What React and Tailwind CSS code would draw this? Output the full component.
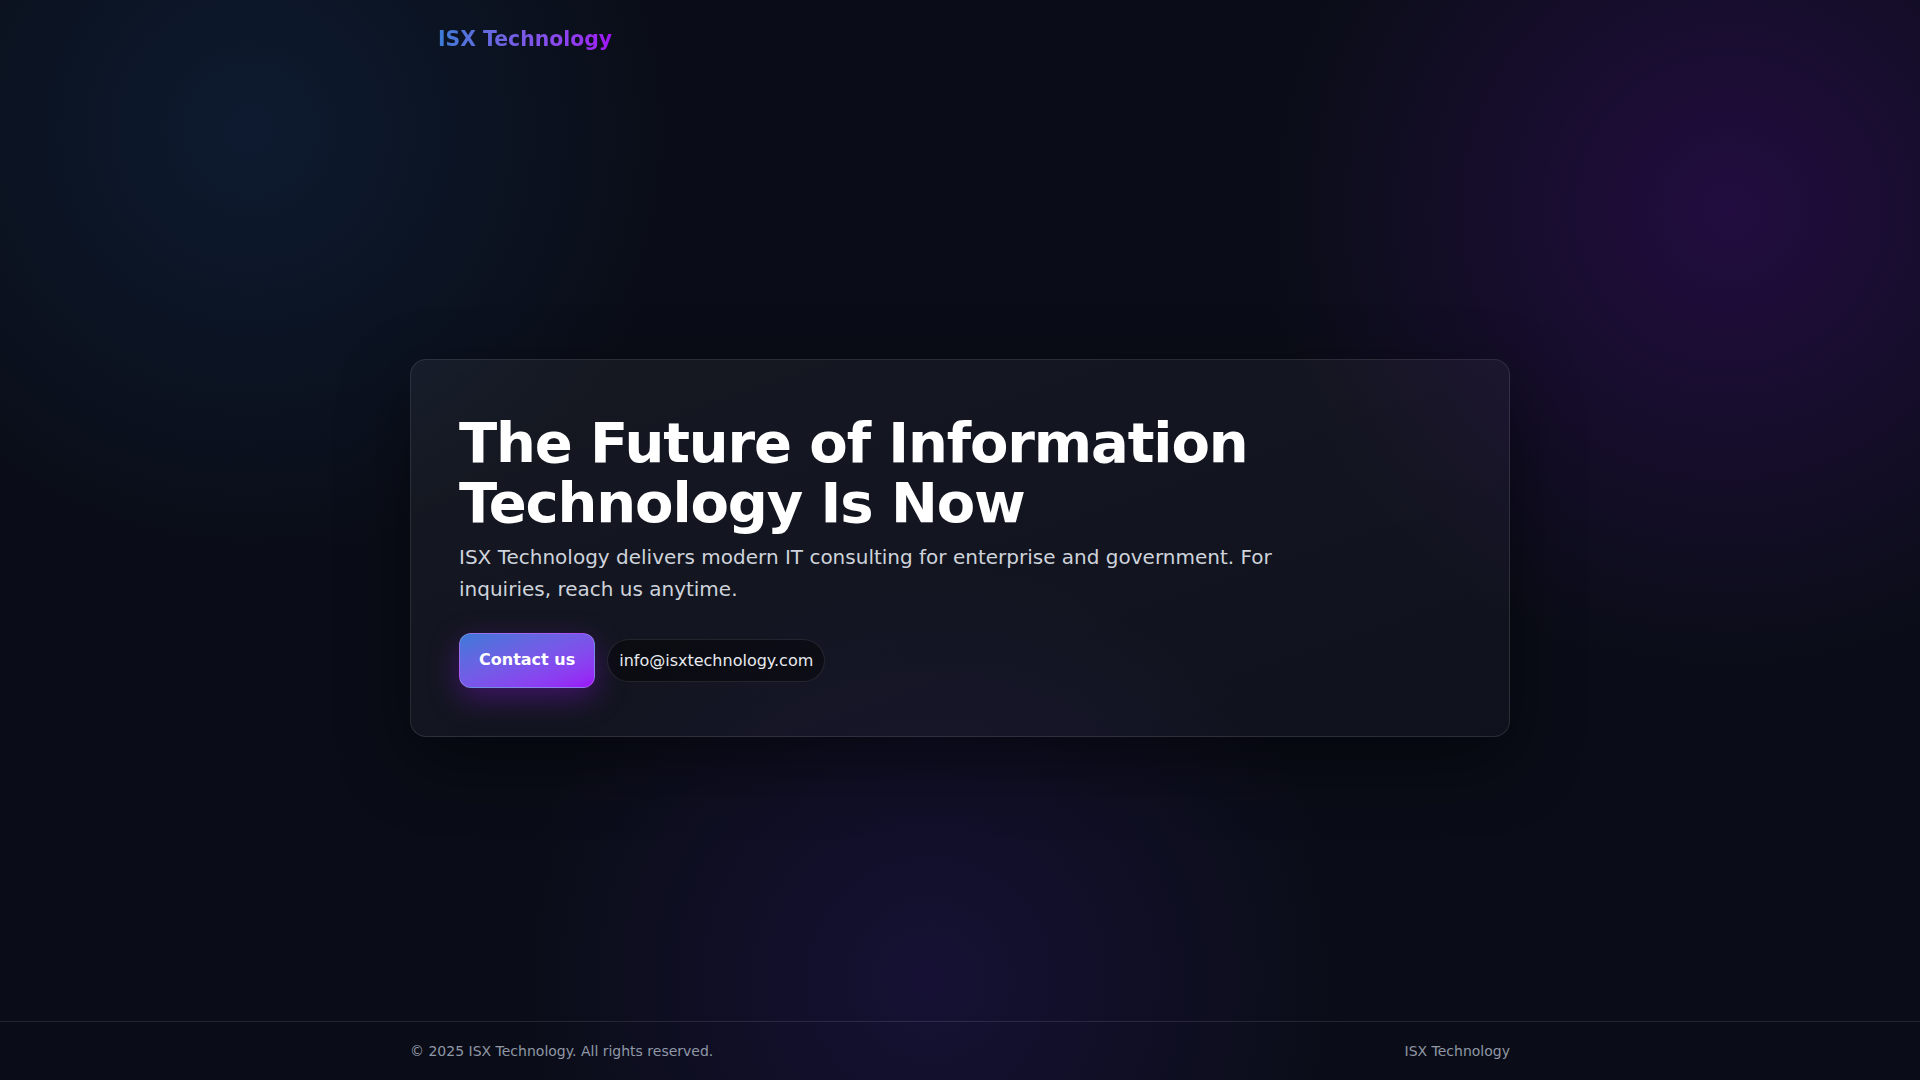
import React from "react";

export default function App() {
  return (
    <div className="min-h-screen flex flex-col bg-[#0a0d17] bg-[radial-gradient(600px_circle_at_250px_130px,rgba(16,40,72,0.5),transparent_72%),radial-gradient(620px_circle_at_1730px_210px,rgba(58,12,104,0.5),transparent_75%),radial-gradient(560px_circle_at_930px_980px,rgba(38,22,92,0.42),transparent_75%)] font-['DejaVu_Sans',sans-serif] text-white">
      <header className="w-full max-w-[1100px] mx-auto px-7 pt-[25px] pb-[19px]">
        <span className="text-[20.4px] font-bold leading-7 bg-gradient-to-r from-[#3a7bd5] to-[#a00cf7] bg-clip-text text-transparent">
          ISX Technology
        </span>
      </header>

      <main className="flex-1 flex items-center pt-[2px]">
        <section className="w-full max-w-[1100px] mx-auto rounded-2xl border border-white/10 bg-gradient-to-br from-white/[0.05] to-white/[0.025] shadow-[0_24px_70px_rgba(0,0,0,0.45)] p-12">
          <h1 className="mt-[5px] text-[56px] leading-[60px] font-bold tracking-[-0.02em] text-white">
            The Future of Information
            <br />
            Technology Is Now
          </h1>
          <p className="mt-2 max-w-[840px] text-[20px] leading-8 text-[#cfd3dc]">
            ISX Technology delivers modern IT consulting for enterprise and
            government. For inquiries, reach us anytime.
          </p>
          <div className="mt-7 flex items-center gap-3">
            <button className="rounded-xl border border-white/20 bg-gradient-to-br from-[#3a78d8] to-[#9b0ef8] px-[19px] py-[14.5px] text-base leading-6 font-bold text-white shadow-[0_10px_30px_rgba(150,20,240,0.35)]">
              Contact us
            </button>
            <span className="rounded-full border border-white/10 bg-black/40 px-[11px] py-2 text-base leading-[25px] text-[#e8eaef]">
              info@isxtechnology.com
            </span>
          </div>
        </section>
      </main>

      <footer className="border-t border-white/10">
        <div className="w-full max-w-[1100px] mx-auto flex items-center justify-between py-[19px] text-sm leading-5 text-[#9097a6]">
          <span>© 2025 ISX Technology. All rights reserved.</span>
          <span>ISX Technology</span>
        </div>
      </footer>
    </div>
  );
}
